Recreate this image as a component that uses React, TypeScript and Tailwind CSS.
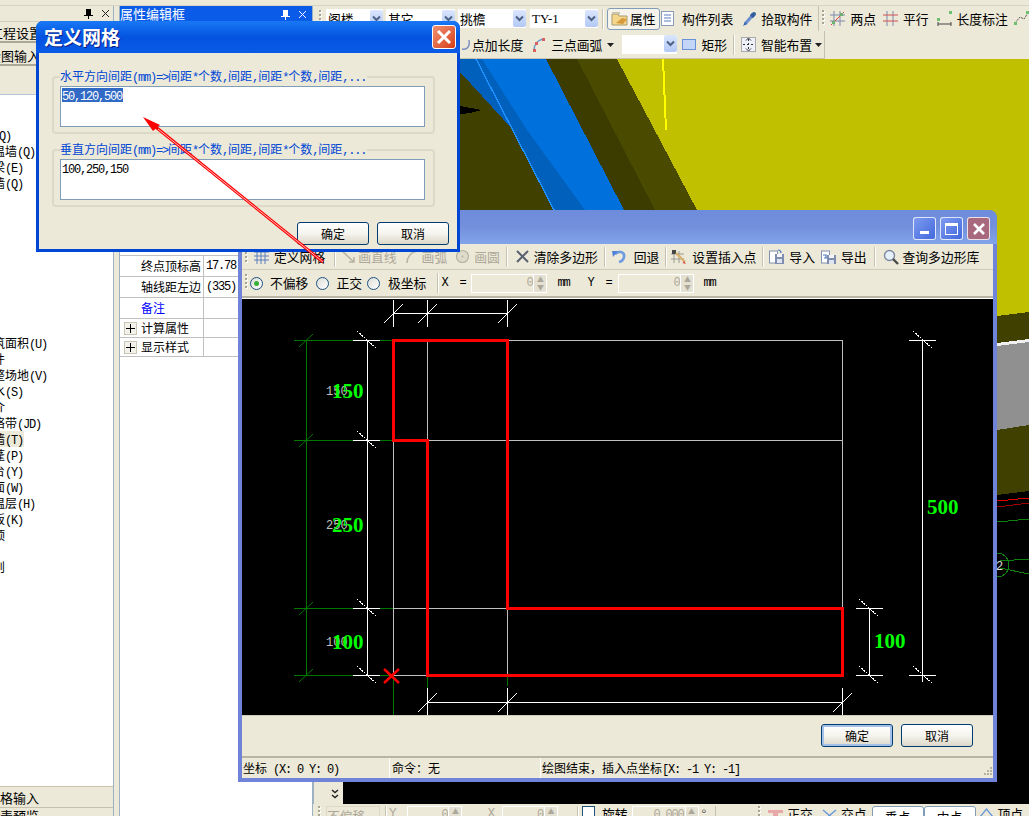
import React from "react";

const latin = "font-['Liberation_Mono'] tracking-[-1.2px]";

function T({ children }: { children: string }) {
  const parts = children.split(/([\x00-\x7f]+)/).filter(Boolean);
  return (
    <>
      {parts.map((p, i) =>
        /^[\x00-\x7f]+$/.test(p) ? (
          <span key={i} className={latin + " whitespace-pre"}>{p}</span>
        ) : (
          <span key={i}>{p}</span>
        )
      )}
    </>
  );
}

function Grip({ h = 18 }: { h?: number }) {
  const n = Math.floor(h / 4);
  return (
    <svg width="3" height={h} className="shrink-0">
      {Array.from({ length: n }).map((_, i) => (
        <g key={i}>
          <rect x="1" y={i * 4 + 1} width="2" height="2" fill="#fff" />
          <rect x="0" y={i * 4} width="2" height="2" fill="#a8a594" />
        </g>
      ))}
    </svg>
  );
}

function Sep({ ml = 0, h = 20 }: { ml?: number; h?: number }) {
  return <div className="w-[1px] shrink-0 bg-[#c5c2b0] border-r border-white box-content" style={{ marginLeft: ml, height: h }} />;
}

function Arrow() {
  return (
    <div className="w-[13px] h-[17px] shrink-0 rounded-[2px] bg-gradient-to-b from-[#dbe6fd] to-[#b2c8f5] flex items-center justify-center">
      <svg width="9" height="7" viewBox="0 0 9 7">
        <path d="M1 1.5 L4.5 5 L8 1.5" fill="none" stroke="#4d6185" strokeWidth="2" />
      </svg>
    </div>
  );
}

const Caret = () => (
  <svg width="7" height="4" viewBox="0 0 7 4" className="shrink-0">
    <path d="M0 0H7L3.5 4Z" fill="#222" />
  </svg>
);

function Combo({ w, ml, text, mono }: { w: number; ml: number; text: string; mono?: boolean }) {
  return (
    <div className="h-[19px] bg-white flex items-center justify-between shrink-0 pl-[2px] overflow-hidden" style={{ width: w, marginLeft: ml }}>
      <span className={mono ? "font-['Liberation_Serif'] text-[13px]" : ""}>{text}</span>
      <Arrow />
    </div>
  );
}

function Item({ ml, icon, text, gap = 5, dim }: { ml: number; icon: React.ReactNode; text: string; gap?: number; dim?: boolean }) {
  return (
    <div className={"flex items-center shrink-0 " + (dim ? "text-[#aca899]" : "text-black")} style={{ marginLeft: ml, gap }}>
      {icon}
      <span className="whitespace-nowrap">{text}</span>
    </div>
  );
}

const S = ({ children, w = 15 }: { children: React.ReactNode; w?: number }) => (
  <svg width={w} height="15" viewBox={`0 0 ${w} 15`} className="shrink-0">{children}</svg>
);

const IGrid = () => (
  <S>
    <path d="M0 3H15M0 7H15M0 11H15M3 0V15M7 0V15M11 0V15" stroke="#5a7fc0" strokeWidth="1" fill="none" />
  </S>
);
const ILine = () => (
  <S>
    <path d="M1 2 L13 13 M13 8V13H8" stroke="#b5b2a2" strokeWidth="1.5" fill="none" />
  </S>
);
const IArc = () => (
  <S>
    <path d="M3 14 C3 8 7 3 13 2" stroke="#b5b2a2" strokeWidth="1.5" fill="none" />
  </S>
);
const ICircle = () => (
  <S>
    <circle cx="7.5" cy="7.5" r="6" fill="#dedbcb" stroke="#b5b2a2" strokeWidth="1.2" />
    <circle cx="7.5" cy="7.5" r="1" fill="#b5b2a2" />
  </S>
);
const IX = () => (
  <S>
    <path d="M2 2 L13 13 M13 2 L2 13" stroke="#59606e" strokeWidth="2" fill="none" />
  </S>
);
const IUndo = () => (
  <S>
    <path d="M3 5 C7 1 13 3 12 8 C11.5 11 9 12.5 7 13" stroke="#6d9ae0" strokeWidth="2.6" fill="none" />
    <path d="M0 2 L6 2 L1 8 Z" fill="#4f82d8" />
  </S>
);
const IInsert = () => (
  <S w={16}>
    <path d="M3 2V14M8 2V14M0 5H13M0 10H13" stroke="#9a9a92" strokeWidth="1" fill="none" />
    <rect x="1" y="1" width="4" height="4" fill="#444" />
    <path d="M5 4 L14 13" stroke="#d8b070" strokeWidth="2.4" />
    <path d="M13 12 L15 15 L11.5 14 Z" fill="#d85050" />
  </S>
);
const IDisk = ({ flip }: { flip?: boolean }) => (
  <S>
    <rect x="0.5" y="2" width="8" height="12" fill="#fff" stroke="#8090b0" />
    <rect x="6" y={flip ? 6 : 5} width="9" height="10" fill="#7f8db0" />
    <rect x="8" y={flip ? 11 : 10} width="5" height="4" fill="#dfe4ef" />
    <rect x="8" y={flip ? 6 : 5} width="5" height="3" fill="#f4f6fb" />
    <path d={flip ? "M2 6 H5 V9 M3 9H6" : "M9 1 C11 1 12 2 12 4"} stroke="#4d78c0" strokeWidth="1.2" fill="none" />
  </S>
);
const ISearch = () => (
  <svg width="16" height="16" viewBox="0 0 16 16" className="shrink-0">
    <circle cx="6.5" cy="6.5" r="5" fill="#e6f0fa" stroke="#7a8aa0" strokeWidth="1.4" />
    <path d="M10 10 L15 15" stroke="#4a4a4a" strokeWidth="2.4" />
  </svg>
);
const IProp = () => (
  <svg width="18" height="16" viewBox="0 0 18 16" className="shrink-0">
    <path d="M1 3 H7 L8 5 H16 V14 H1 Z" fill="#f5d78c" stroke="#a89a70" />
    <path d="M5 12 L11 7 L16 8 L12 13 Z" fill="#d89b3c" />
    <rect x="1" y="1" width="8" height="2" fill="#c8c4b0" />
  </svg>
);
const IList = () => (
  <S w={14}>
    <rect x="0.5" y="0.5" width="12" height="14" fill="#fdfdff" stroke="#8a9ab8" />
    <path d="M3 4H10M3 7H10M3 10H10" stroke="#5d7fc0" strokeWidth="1.2" />
  </S>
);
const IPipette = () => (
  <S>
    <path d="M3 13 L10 5" stroke="#6d90d0" strokeWidth="3.4" />
    <path d="M9 3 L12 6" stroke="#315a9e" strokeWidth="3.2" />
    <circle cx="12" cy="3" r="2" fill="#345f9f" />
    <path d="M1 15 L3 11 L5 13 Z" fill="#2f64b0" />
  </S>
);
const ITwo = () => (
  <S>
    <path d="M4 0V15M10 0V15M0 4H15M0 10H15" stroke="#7d8ab0" strokeWidth="1" fill="none" />
    <path d="M1 14 L14 1" stroke="#d84040" strokeWidth="1" />
    <rect x="2" y="10" width="3" height="3" fill="#6db06d" />
    <rect x="10" y="2" width="3" height="3" fill="#6db06d" />
  </S>
);
const IPar = () => (
  <S>
    <path d="M4 0V15M10 0V15" stroke="#7d8ab0" strokeWidth="1" fill="none" />
    <path d="M0 4H15M0 10H15" stroke="#d05050" strokeWidth="1" fill="none" />
  </S>
);
const ILen = () => (
  <S>
    <rect x="0" y="7" width="3" height="3" fill="#6cc070" />
    <rect x="12" y="0" width="3" height="3" fill="#6cc070" />
    <path d="M1 11V15M14 11V15M1 13H14" stroke="#444" strokeWidth="1" fill="none" />
  </S>
);
const IPoly = () => (
  <S>
    <path d="M1 12 L6 6 L10 8 L14 2" stroke="#555" strokeWidth="1" fill="none" strokeDasharray="2 1" />
    <rect x="0" y="11" width="3" height="3" fill="#6cc070" />
    <rect x="12" y="0" width="3" height="3" fill="#6cc070" />
  </S>
);
const IArc3 = () => (
  <S>
    <path d="M3 13 C3 7 7 3 12 2" stroke="#6d9ad0" strokeWidth="1.5" fill="none" />
    <rect x="2" y="12" width="3" height="3" fill="#d86060" />
    <rect x="4" y="5" width="3" height="3" fill="#d86060" />
    <rect x="11" y="1" width="3" height="3" fill="#d86060" />
  </S>
);
const IRect = () => (
  <S>
    <rect x="0.5" y="2.5" width="13" height="10" fill="#c3d6f8" stroke="#6a90d8" />
  </S>
);
const ISmart = () => (
  <S>
    <rect x="0.5" y="0.5" width="14" height="14" fill="#eef2f8" stroke="#667" strokeDasharray="1 1" />
    <path d="M7.5 2V13M2 7.5H13" stroke="#334" strokeDasharray="2 2" />
    <path d="M5 3.5L7.5 1L10 3.5M5 11.5L7.5 14L10 11.5" stroke="#334" fill="none" />
  </S>
);
const IOrtho = () => (
  <S>
    <rect x="0" y="3" width="15" height="3" fill="#e8a8a8" />
    <rect x="5" y="3" width="5" height="12" fill="#e8a8a8" />
  </S>
);
const ICross = () => (
  <S>
    <path d="M1 3L14 14M14 3L1 14" stroke="#6a98d8" strokeWidth="1.4" fill="none" />
  </S>
);
const ITop = () => (
  <S>
    <path d="M1 10L7.5 2L14 10" stroke="#6a98d8" strokeWidth="1.4" fill="none" />
  </S>
);

function Radio({ on }: { on?: boolean }) {
  return (
    <div className="w-[13px] h-[13px] shrink-0 rounded-full border border-[#1c5180] bg-gradient-to-br from-[#dcdcd7] to-white flex items-center justify-center">
      {on && <div className="w-[5px] h-[5px] rounded-full bg-[#35b035]" />}
    </div>
  );
}

function Spin({ w, ml, value, h = 19 }: { w: number; ml: number; value: string; h?: number }) {
  return (
    <div className="flex shrink-0 border border-white text-[#aca899]" style={{ width: w, marginLeft: ml, height: h }}>
      <div className={"flex-1 text-right pr-[1px] text-[12px] " + latin}>{value}</div>
      <div className="w-[13px] flex flex-col text-[7px] leading-[8px] text-center bg-[#e4e1d2] border-l border-white">
        <span>▲</span>
        <span>▼</span>
      </div>
    </div>
  );
}

function XPButton({ text, primary, ml = 0 }: { text: string; primary?: boolean; ml?: number }) {
  return (
    <div
      className={
        "w-[72px] h-[23px] rounded-[3px] border border-[#003c74] flex items-center justify-center bg-gradient-to-b from-white via-[#f5f4ee] to-[#dcd8c8] shrink-0 " +
        (primary ? "shadow-[inset_0_0_0_2px_#a4bfe8]" : "")
      }
      style={{ marginLeft: ml }}
    >
      {text}
    </div>
  );
}

function Group({ legend, value, selected, mt }: { legend: string; value: string; selected?: boolean; mt: number }) {
  return (
    <div className="relative w-[383px] h-[58px] ml-[13px] border-2 border-[#dcd9c8] rounded-[4px]" style={{ marginTop: mt }}>
      <div className="absolute left-[6px] top-[-9px] bg-[#ece9d8] pr-[1px] text-[#0046d5] whitespace-nowrap leading-[14px]">
        <T>{legend}</T>
      </div>
      <div className="absolute left-[6px] top-[8px] w-[365px] h-[41px] bg-white border border-[#7f9db9] pl-[1px] pt-[1px] leading-[14px]">
        <span className={selected ? "bg-[#316ac5] text-white inline-block h-[14px] pr-[1px]" : "text-black"}>
          <span className={latin}>{value}</span>
        </span>
      </div>
    </div>
  );
}

function PropRow({ label, value, h, blue, plus }: { label: string; value?: string; h: number; blue?: boolean; plus?: boolean }) {
  return (
    <div className="flex border-b border-[#c0c0c0] w-full" style={{ height: h }}>
      <div className="w-[84px] flex items-center border-r border-[#c0c0c0] shrink-0">
        <div className="w-[21px] shrink-0 flex justify-center">
          {plus && (
            <div className="w-[13px] h-[13px] border border-[#c8c5b5] bg-[#f2f1ea] flex items-center justify-center">
              <svg width="9" height="9"><path d="M4.5 0V9M0 4.5H9" stroke="#000" /></svg>
            </div>
          )}
        </div>
        <span className={blue ? "text-[#0000ff]" : ""}>{label}</span>
      </div>
      <div className={"pl-[2px] flex items-center whitespace-nowrap " + latin}>{value}</div>
    </div>
  );
}

const tree: [number, string][] = [
  [2, "(Q)"], [3, "温墙(Q)"], [4, "梁(E)"], [5, "墙(Q)"], [15, "筑面积(U)"], [16, "件"], [17, "整场地(V)"],
  [18, "水(S)"], [19, "介"], [20, "络带(JD)"], [21, "墙(T)"], [22, "蓬(P)"], [23, "台(Y)"], [24, "面(W)"],
  [25, "温层(H)"], [26, "板(K)"], [27, "顶"], [29, "则"],
];

function Tree() {
  const rows = Array.from({ length: 30 }).map((_, k) => tree.find((t) => t[0] === k));
  return (
    <div className="flex-1 bg-white overflow-hidden flex flex-col">
      {rows.map((r, k) => (
        <div key={k} className="h-[16px] shrink-0 leading-[16px] flex">
          {r && (
            <div className={"ml-[-7px] whitespace-nowrap " + (r[0] === 21 ? "bg-[#ece9d8] pr-[1px]" : "")}>
              <T>{r[1]}</T>
            </div>
          )}
        </div>
      ))}
    </div>
  );
}

function Scene3D() {
  return (
    <svg viewBox="343 59 686 745" width="686" height="745" className="block flex-1" shapeRendering="crispEdges">
      <rect x="343" y="59" width="686" height="745" fill="#000" />
      <path d="M343 59H1029V312L997 317L700 400L343 300Z" fill="#c0c000" />
      <path d="M997 316L1029 312V341L997 345Z" fill="#404000" />
      <path d="M997 345L1029 341L1029 425L997 430Z" fill="#909090" />
      <path d="M997 343L1029 339V342L997 346Z" fill="#f0f0f0" />
      <path d="M997 430L1029 425V491L997 495Z" fill="#404000" />
      <path d="M546 59H577L655 210H624Z" fill="#3c3c00" />
      <path d="M577 59H617L697 210H655Z" fill="#4a4a00" />
      <path d="M455 59H480L530 130L575 210H455Z" fill="#404000" />
      <path d="M455 59H482L527 130L585 210H554L513 130L461 73L455 70Z" fill="#0060bc" />
      <path d="M482 59H546L624 210H585L527 130Z" fill="#0070dc" />
      <path d="M476 59L554 210" stroke="#1e90ff" strokeWidth="1.4" fill="none" />
      <path d="M455 105L482 110L470 113L455 115Z" fill="#000" />
      <path d="M663 59L666 130" stroke="#ffff00" strokeWidth="2" />
      <path d="M997 501L1029 498" stroke="#e00000" />
      <path d="M997 507L1029 503" stroke="#a00000" />
      <path d="M997 522L1029 519" stroke="#108010" />
      <circle cx="997" cy="565" r="12" fill="none" stroke="#108010" />
      <path d="M1000 561L1029 559M1000 568L1029 574" stroke="#108010" />
      <text x="996" y="570" fill="#ddd" className="font-['Liberation_Mono'] text-[12px]">2</text>
    </svg>
  );
}

function Drawing() {
  const ys = [340, 440, 608, 675];
  const xs = [393, 427, 507, 842];
  const white = "#ffffff";
  const green = "#007800";
  const gray = "#c0c0c0";
  const tickSlash = (x: number, y: number, k: string) => (
    <path key={k} d={`M${x - 9} ${y + 10}L${x + 10} ${y - 9}`} stroke={white} fill="none" shapeRendering="auto" />
  );
  const tickBack = (x: number, y: number, k: string) => (
    <path key={k} d={`M${x - 10} ${y - 9}L${x + 9} ${y + 8}`} stroke={white} fill="none" strokeDasharray="2 1" />
  );
  const small = "font-['Liberation_Mono'] text-[12px]";
  const big = "font-['Liberation_Serif'] text-[21px] font-bold";
  return (
    <svg viewBox="242 299 751 416" width="751" height="416" className="block" shapeRendering="crispEdges">
      <rect x="242" y="299" width="751" height="416" fill="#000" />
      {ys.map((y) => <path key={y} d={`M393 ${y}H842`} stroke={gray} />)}
      {xs.map((x) => <path key={x} d={`M${x} 340V675`} stroke={gray} />)}
      <path d="M393 675V715M427 675V688M507 675V686" stroke={green} />
      <path d="M306 340V675" stroke={green} />
      {ys.map((y) => <path key={"g" + y} d={`M294 ${y}H393`} stroke={green} />)}
      {ys.map((y) => <path key={"gt" + y} d={`M299 ${y + 7}L313 ${y - 6}`} stroke={green} fill="none" shapeRendering="auto" />)}
      {ys.map((y) => <path key={"w" + y} d={`M353 ${y}H380`} stroke={white} />)}
      {ys.map((y) => tickBack(367, y, "b" + y))}
      <path d="M367 340V675" stroke={white} />
      <path d="M393 313H507M393 300V327M427 300V327M507 300V327" stroke={white} fill="none" />
      {[393, 427, 507].map((x) => tickSlash(x, 313, "t" + x))}
      <path d="M427 702H842M427 688V715M507 688V715M842 688V715" stroke={white} fill="none" />
      {[427, 507, 842].map((x) => tickSlash(x, 702, "u" + x))}
      <path d="M922 340V682M909 340H936M909 675H936" stroke={white} fill="none" />
      {tickBack(923, 340, "r1")}
      {tickBack(923, 675, "r2")}
      <path d="M869 608V675M856 608H883M856 675H883" stroke={white} fill="none" />
      {tickBack(869, 608, "r3")}
      {tickBack(869, 675, "r4")}
      <path d="M393 340H507V608H842V675H427V440H393Z" fill="none" stroke="#ff0000" strokeWidth="3" />
      <path d="M384 669L399 683M399 669L384 683" stroke="#ff0000" strokeWidth="2.4" fill="none" shapeRendering="auto" />
      <g fill={gray} className={small}>
        <text x="326" y="395">150</text>
        <text x="326" y="529">250</text>
        <text x="326" y="646">100</text>
      </g>
      <g fill="#00ff00" className={big} shapeRendering="auto">
        <text x="332" y="398">150</text>
        <text x="332" y="532">250</text>
        <text x="332" y="649">100</text>
        <text x="927" y="514">500</text>
        <text x="874" y="648">100</text>
      </g>
    </svg>
  );
}

function PopupWindow() {
  return (
    <div className="absolute left-[238px] top-[210px] w-[759px] h-[572px] bg-[#6f84d9] rounded-t-[8px] flex flex-col px-[4px] pb-[4px]">
      <div className="h-[34px] shrink-0 -mx-[4px] rounded-t-[8px] bg-gradient-to-b from-[#6e8cdc] via-[#7390dc] to-[#82a4ea] flex items-start justify-end pr-[7px] pt-[7px] gap-[4px]">
        <div className="w-[23px] h-[23px] rounded-[3px] border border-white/80 bg-gradient-to-br from-[#7f9af0] to-[#4268dc] flex items-end pl-[6px] pb-[5px]">
          <div className="w-[9px] h-[3px] bg-white" />
        </div>
        <div className="w-[23px] h-[23px] rounded-[3px] border border-white/80 bg-gradient-to-br from-[#7f9af0] to-[#4268dc] flex items-center justify-center">
          <div className="w-[13px] h-[12px] border border-t-[3px] border-white" />
        </div>
        <div className="w-[23px] h-[23px] rounded-[3px] border border-white/80 bg-[#a8697f] flex items-center justify-center">
          <svg width="14" height="14"><path d="M2 2L12 12M12 2L2 12" stroke="#fff" strokeWidth="2.6" /></svg>
        </div>
      </div>
      <div className="flex-1 bg-[#ece9d8] flex flex-col min-h-0">
        <div className="h-[26px] shrink-0 flex items-center text-[12.8px] border-b border-[#cfccb9]">
          <div className="ml-[3px]"><Grip /></div>
          <Item ml={6} icon={<IGrid />} text="定义网格" />
          <Sep ml={9} />
          <Item ml={5} dim icon={<ILine />} text="画直线" gap={2} />
          <Item ml={7} dim icon={<IArc />} text="画弧" gap={3} />
          <Item ml={8} dim icon={<ICircle />} text="画圆" gap={4} />
          <Sep ml={6} />
          <Item ml={7} icon={<IX />} text="清除多边形" gap={4} />
          <Sep ml={6} />
          <Item ml={6} icon={<IUndo />} text="回退" gap={7} />
          <Sep ml={6} />
          <Item ml={4} icon={<IInsert />} text="设置插入点" gap={5} />
          <Sep ml={6} />
          <Item ml={5} icon={<IDisk />} text="导入" gap={5} />
          <Item ml={6} icon={<IDisk flip />} text="导出" gap={5} />
          <Sep ml={7} />
          <Item ml={7} icon={<ISearch />} text="查询多边形库" gap={4} />
        </div>
        <div className="h-[28px] shrink-0 flex items-center border-b-2 border-[#b8b5a4] text-[12.8px]">
          <div className="ml-[3px]"><Grip /></div>
          <div className="ml-[2px]"><Radio on /></div>
          <span className="ml-[7px]">不偏移</span>
          <div className="ml-[8px]"><Radio /></div>
          <span className="ml-[7px]">正交</span>
          <div className="ml-[5px]"><Radio /></div>
          <span className="ml-[8px]">极坐标</span>
          <Sep ml={11} />
          <span className={"ml-[2px] text-[12px] whitespace-pre " + latin}>X  =</span>
          <Spin w={76} ml={6} value="0" />
          <span className={"ml-[10px] text-[12px] " + latin}>mm</span>
          <span className={"ml-[18px] text-[12px] whitespace-pre " + latin}>Y  =</span>
          <Spin w={76} ml={7} value="0" />
          <span className={"ml-[9px] text-[12px] " + latin}>mm</span>
        </div>
        <div className="h-[1px] bg-white shrink-0" />
        <Drawing />
        <div className="h-[41px] shrink-0 border-t border-[#d0cdbb] flex items-center justify-end pr-[20px] pb-[1px]">
          <XPButton text="确定" primary />
          <XPButton text="取消" ml={8} />
        </div>
        <div className="flex-1 border-t-2 border-[#b8b5a4] flex items-center min-h-0 leading-[20px] relative">
          <div className="w-[148px] pl-[1px] border-r border-white h-full"><T>坐标 (X: 0 Y: 0)</T></div>
          <div className="w-[151px] pl-[2px] border-r border-white h-full">{"命令\uFF1A无"}</div>
          <div className="pl-[1px] flex-1 h-full"><T>{"绘图结束\uFF0C插入点坐标[X: -1 Y: -1]"}</T></div>
          <svg width="12" height="12" className="absolute right-[1px] bottom-[1px]">
            <path d="M10 2h2v2h-2zM7 5h2v2H7zM10 5h2v2h-2zM4 8h2v2H4zM7 8h2v2H7zM10 8h2v2h-2z" fill="#b5b2a2" />
          </svg>
        </div>
      </div>
    </div>
  );
}

function Dialog() {
  return (
    <div className="absolute left-[36px] top-[21px] w-[424px] h-[231px] bg-[#0046d5] rounded-t-[7px] flex flex-col px-[3px] pb-[3px]">
      <div className="h-[32px] shrink-0 -mx-[3px] rounded-t-[7px] bg-gradient-to-b from-[#1a78f5] via-[#0453e0] to-[#0a5ae8] flex items-center justify-between pl-[8px] pr-[4px]">
        <span className="text-white text-[19px] font-bold leading-[24px] [text-shadow:1px_1px_#0a1a80]">定义网格</span>
        <div className="w-[24px] h-[24px] rounded-[3px] border border-white bg-gradient-to-br from-[#ef9070] to-[#d63a10] flex items-center justify-center">
          <svg width="16" height="16"><path d="M2 2L14 14M14 2L2 14" stroke="#fff" strokeWidth="3" /></svg>
        </div>
      </div>
      <div className="flex-1 bg-[#ece9d8] flex flex-col min-h-0">
        <Group mt={23} legend="水平方向间距(mm)=>间距*个数,间距,间距*个数,间距,..." value="50,120,500" selected />
        <Group mt={15} legend="垂直方向间距(mm)=>间距*个数,间距,间距*个数,间距,..." value="100,250,150" />
        <div className="flex justify-end pr-[8px] mt-[15px]">
          <XPButton text="确定" />
          <XPButton text="取消" ml={8} />
        </div>
      </div>
    </div>
  );
}

function BottomToolbar() {
  return (
    <div className="h-[12px] shrink-0 overflow-hidden flex items-start text-[12.8px] bg-[#ece9d8] pl-[5px] pt-[2px]">
      <Grip h={12} />
      <div className="ml-[5px] w-[54px] h-[19px] border border-[#dcd9c8] text-[#aca899] flex items-center shrink-0">不偏移</div>
      <Sep ml={5} h={14} />
      <span className={"ml-[2px] text-[#aca899] " + latin}>Y</span>
      <Spin w={55} ml={12} value="0" />
      <span className={"ml-[25px] text-[#aca899] " + latin}>X</span>
      <Spin w={56} ml={8} value="0" />
      <Sep ml={19} h={14} />
      <div className="ml-[3px] w-[13px] h-[13px] border border-[#1c5180] bg-white shrink-0" />
      <span className="ml-[7px]">旋转</span>
      <Spin w={67} ml={4} value="0.000" />
      <span className="ml-[3px] text-[#555]">°</span>
      <div className="ml-[9px] w-[1px] h-[14px] bg-[#c5c2b0]" />
      <div className="ml-[42px]"><Grip h={12} /></div>
      <Item ml={7} icon={<IOrtho />} text="正交" gap={4} />
      <Item ml={9} icon={<ICross />} text="交点" gap={4} />
      <div className="ml-[5px] w-[52px] h-[22px] border border-[#7f9db9] rounded-[3px] bg-white flex items-center justify-center shrink-0">垂点</div>
      <div className="w-[52px] h-[22px] border border-[#7f9db9] rounded-[3px] bg-white flex items-center justify-center shrink-0">中点</div>
      <Item ml={3} icon={<ITop />} text="顶点" gap={4} />
    </div>
  );
}

export default function App() {
  return (
    <div className="relative w-[1029px] h-[816px] overflow-hidden bg-[#ece9d8] text-black text-[12px] leading-[16px] font-['Noto_Sans_CJK_SC',sans-serif] flex flex-col">
      <div className="h-[6px] shrink-0 border-b border-[#d8d5c4]" />
      <div className="flex-1 flex min-h-0">
        {/* left tree panel */}
        <div className="w-[114px] shrink-0 flex flex-col border-r border-[#9db0c4] overflow-hidden">
          <div className="h-[16px] shrink-0 flex items-center justify-end gap-[8px] pr-[3px] border-b border-[#d0cdbc]">
            <svg width="9" height="11"><path d="M2 1H7V7H9V8H5V11H4V8H0V7H2Z" fill="#000" /></svg>
            <svg width="9" height="9"><path d="M1 1L8 8M8 1L1 8" stroke="#222" /></svg>
          </div>
          <div className="h-[21px] shrink-0 border-b-2 border-[#aca899] leading-[20px] text-[13px] -ml-[10px] whitespace-nowrap pt-[1px]">工程设置</div>
          <div className="h-[23px] shrink-0 border-b-2 border-[#aca899] leading-[20px] text-[13px] -ml-[12px] whitespace-nowrap pt-[3px]">绘图输入</div>
          <div className="h-[29px] shrink-0 border-b border-[#b5c4d6]" />
          <Tree />
          <div className="h-[22px] shrink-0 border-t border-[#9db0c4] border-b border-[#c5c2b0] -ml-[13px] leading-[21px] text-[13px] whitespace-nowrap">表格输入</div>
          <div className="h-[8px] shrink-0 -ml-[13px] leading-[16px] overflow-hidden text-[13px] whitespace-nowrap">报表预览</div>
        </div>
        {/* splitter */}
        <div className="w-[6px] shrink-0 border-r border-[#9db0c4]" />
        {/* property panel */}
        <div className="w-[193px] shrink-0 flex flex-col bg-white border-r border-[#9db0c4]">
          <div className="h-[16px] shrink-0 bg-[#0a5ce8] text-white text-[13px] leading-[16px] flex items-center justify-between pr-[5px]">
            <span>属性编辑框</span>
            <span className="flex items-center gap-[8px]">
              <svg width="9" height="11"><path d="M2 1H7V7H9V8H5V11H4V8H0V7H2Z" fill="#fff" /></svg>
              <svg width="9" height="9"><path d="M1 1L8 8M8 1L1 8" stroke="#fff" /></svg>
            </span>
          </div>
          <div className="h-[233px] shrink-0" />
          <div className="border-t border-[#c0c0c0]">
            <PropRow label="终点顶标高" value="17.78" h={21} />
            <PropRow label="轴线距左边" value="(335)" h={21} />
            <PropRow label="备注" h={21} blue />
            <PropRow label="计算属性" h={19} plus />
            <PropRow label="显示样式" h={19} plus />
          </div>
        </div>
        {/* main */}
        <div className="flex-1 min-w-0 flex flex-col text-[12.8px]">
          <div className="h-[25px] shrink-0 flex items-center overflow-hidden">
            <div className="ml-[6px]"><Grip /></div>
            <Combo ml={4} w={57} text="阁楼" />
            <Combo ml={3} w={69} text="其它" />
            <Combo ml={3} w={68} text="挑檐" />
            <Combo ml={4} w={68} text="TY-1" mono />
            <Sep ml={4} />
            <div className="ml-[3px] w-[53px] h-[22px] shrink-0 rounded-[3px] border border-[#7f9db9] bg-[#f5f3ea] flex items-center pl-[3px] gap-[1px]">
              <IProp />
              <span>属性</span>
            </div>
            <Item ml={1} icon={<IList />} text="构件列表" gap={7} />
            <Item ml={9} icon={<IPipette />} text="拾取构件" gap={4} />
            <div className="ml-[6px] w-[1px] h-[25px] bg-[#c5c2b0] shrink-0" />
            <div className="ml-[3px]"><Grip /></div>
            <Item ml={5} icon={<ITwo />} text="两点" />
            <Item ml={7} icon={<IPar />} text="平行" />
            <Item ml={8} icon={<ILen />} text="长度标注" />
            <div className="ml-[6px]"><IPoly /></div>
          </div>
          <div className="h-[28px] shrink-0 flex items-center">
            <div className="w-[512px] h-[28px] shrink-0 flex items-center border-b border-r border-[#c5c2b0] pl-[147px]">
              <svg width="12" height="15" className="shrink-0"><path d="M2 12 C7 13 10 10 9 3" stroke="#7a8fc0" strokeWidth="1.4" fill="none" /></svg>
              <span className="whitespace-nowrap">点加长度</span>
              <Item ml={8} icon={<IArc3 />} text="三点画弧" gap={5} />
              <div className="ml-[5px]"><Caret /></div>
              <div className="ml-[8px] w-[55px] h-[19px] bg-white shrink-0 flex justify-end"><Arrow /></div>
              <Item ml={5} icon={<IRect />} text="矩形" gap={4} />
              <Sep ml={6} />
              <Item ml={6} icon={<ISmart />} text="智能布置" gap={5} />
              <div className="ml-[3px]"><Caret /></div>
            </div>
            <div className="flex-1 border-b border-[#ece9d8]" />
          </div>
          <div className="flex-1 min-h-0 flex">
            <div className="w-[30px] shrink-0 border-l border-[#9db0c4] flex flex-col justify-end items-end pr-[4px] pb-[5px]">
              <svg width="8" height="10" viewBox="0 0 8 10">
                <path d="M1 1L4 3.5L7 1M1 6L4 8.5L7 6" stroke="#222" strokeWidth="1.4" fill="none" />
              </svg>
            </div>
            <Scene3D />
          </div>
          <BottomToolbar />
        </div>
      </div>
      <PopupWindow />
      <Dialog />
      <svg width="1029" height="816" className="absolute left-0 top-0 pointer-events-none">
        <line x1="323" y1="262" x2="152" y2="124" stroke="#ff0000" strokeWidth="3" />
        <line x1="323" y1="262" x2="158" y2="129" stroke="#ffb8b8" strokeWidth="1" />
        <polygon points="143,117 160,125 153,131" fill="#ff0000" />
      </svg>
    </div>
  );
}
